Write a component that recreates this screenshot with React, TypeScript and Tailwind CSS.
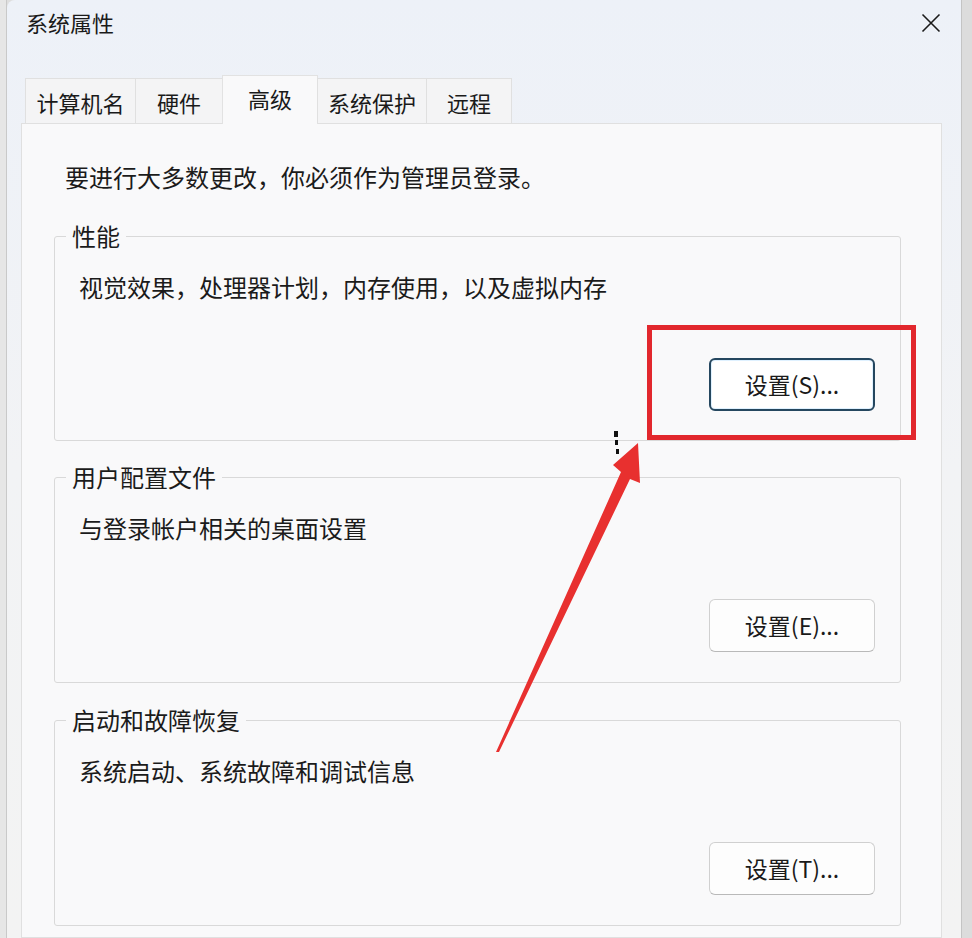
import React from 'react';

const font = { fontFamily: '"Noto Sans CJK SC", "Noto Sans", sans-serif' };

interface GroupProps {
  title: string;
  text: string;
  button: string;
  spacing: string;
  focused?: boolean;
}

function Group({ title, text, button, spacing, focused }: GroupProps) {
  return (
    <fieldset className={`${spacing} ml-[32px] mr-[40px] rounded-[3px] border border-[#d9d9d9]`}>
      <legend className="ml-[11px] px-[6px] text-[24px] leading-[32px] text-[#1b1b1b]">
        {title}
      </legend>
      <div className="mt-[19px] pl-[24px] text-[24px] leading-[32px] text-[#1b1b1b]">
        {text}
      </div>
      <div className="mt-[55px] flex justify-end pr-[25px]">
        <button
          className={`flex h-[53px] w-[166px] items-center justify-center rounded-[6px] text-[23px] text-[#1a1a1a] ${
            focused
              ? 'border-2 border-[#25475f] bg-white shadow-[inset_0_0_0_1px_#dff1ff]'
              : 'border border-[#d0d0d0] border-b-[#b9b9b9] bg-[#fdfdfd]'
          }`}
        >
          {button}
        </button>
      </div>
    </fieldset>
  );
}

const tabs = [
  { label: '计算机名', w: 'w-[111px]' },
  { label: '硬件', w: 'w-[88px]' },
  { label: '高级', w: 'w-[96px]', active: true },
  { label: '系统保护', w: 'w-[110px]' },
  { label: '远程', w: 'w-[86px]' },
];

export default function App() {
  return (
    <div className="relative flex h-[938px] w-[972px] overflow-hidden bg-[#dedede]" style={font}>
      <div className="w-[7px] shrink-0 border-r border-[#c9c9c9] bg-[#e6e6e6]" />

      <div className="flex w-[955px] shrink-0 flex-col rounded-tl-[8px] border-r border-[#c4c4c4] bg-linear-to-b from-[#edf1f8] via-[#f2f3f5] to-[#f3f3f3]">
        <div className="flex h-[44px] items-center justify-between pl-[19px] pr-[20px]">
          <span className="text-[22px] text-[#1a1a1a]">系统属性</span>
          <svg width="20" height="20" viewBox="0 0 20 20" className="mt-[2px]">
            <path d="M1.5 1.5 L18.5 18.5 M18.5 1.5 L1.5 18.5" stroke="#1a1a1a" strokeWidth="1.6" />
          </svg>
        </div>

        <div className="ml-[14px] mr-[19px] mt-[31px] flex flex-1 flex-col">
          <div className="relative z-10 flex h-[48px] items-end pl-[5px]">
            {tabs.map((t) =>
              t.active ? (
                <div
                  key={t.label}
                  className={`${t.w} -mb-px -ml-px flex h-[49px] justify-center border border-b-0 border-[#e2e2e2] bg-[#f9f9fa] pt-[6px] text-[22px] leading-[32px] text-[#1a1a1a]`}
                >
                  {t.label}
                </div>
              ) : (
                <div
                  key={t.label}
                  className={`${t.w} -ml-px flex h-[45px] items-center justify-center border border-b-0 border-[#e0e0e0] bg-[#f4f4f5] pt-[3px] text-[22px] text-[#1a1a1a]`}
                >
                  {t.label}
                </div>
              )
            )}
          </div>

          <div className="flex-1 border border-[#e0e0e0] bg-[#f9f9fa]">
            <div className="pl-[43px] pt-[37px] text-[24px] leading-[32px] text-[#1b1b1b]">
              要进行大多数更改，你必须作为管理员登录。
            </div>
            <Group
              spacing="mt-[27px] pb-[29px]"
              title="性能"
              text="视觉效果，处理器计划，内存使用，以及虚拟内存"
              button="设置(S)..."
              focused
            />
            <Group
              spacing="mt-[20px] pb-[30px]"
              title="用户配置文件"
              text="与登录帐户相关的桌面设置"
              button="设置(E)..."
            />
            <Group
              spacing="mt-[21px] pb-[30px]"
              title="启动和故障恢复"
              text="系统启动、系统故障和调试信息"
              button="设置(T)..."
            />
          </div>
        </div>
      </div>

      <div className="flex-1 bg-[#dcdcdc]" />

      {/* annotation: red box + arrow */}
      <div className="pointer-events-none absolute left-[647px] top-[325px] h-[115px] w-[269px] border-[5px] border-[#e2272d]" />
      <svg className="pointer-events-none absolute left-0 top-0" width="972" height="938">
        <polygon
          points="496,752 499,752 630,479 640,483 638,443 613,465 621,472"
          fill="#e8302f"
        />
        <rect x="614" y="431" width="4" height="6" fill="#111" />
        <rect x="615" y="440" width="3" height="5" fill="#111" />
        <rect x="616" y="449" width="3" height="5" fill="#111" />
      </svg>
    </div>
  );
}
